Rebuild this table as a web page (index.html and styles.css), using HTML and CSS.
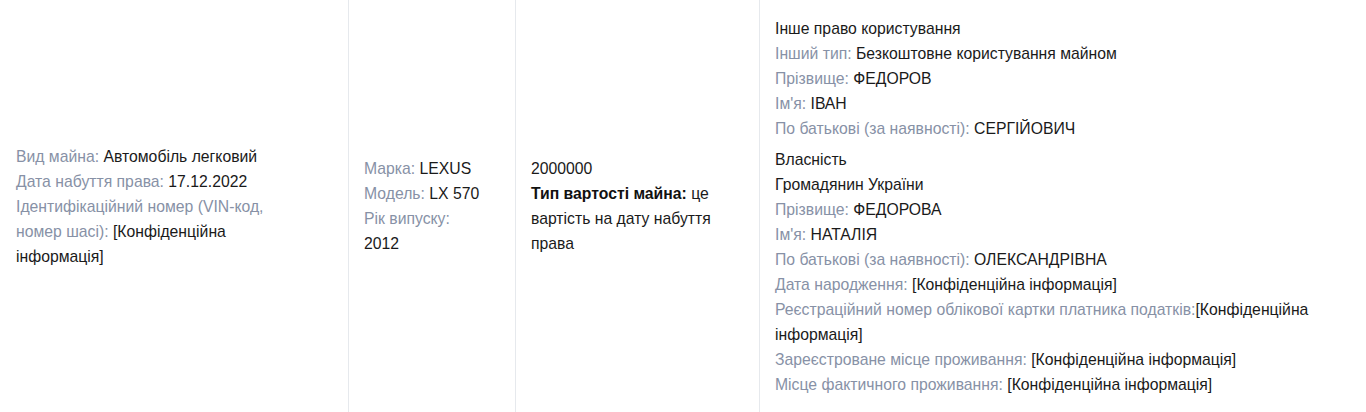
FILE: index.html
```html
<!DOCTYPE html>
<html lang="uk">
<head>
<meta charset="utf-8">
<title>Транспортний засіб</title>
<link rel="stylesheet" href="styles.css">
</head>
<body>
<div class="row">
  <div class="cell c1">
    <div class="inner w1">
      <span class="lbl">Вид майна:</span> Автомобіль легковий<br>
      <span class="lbl">Дата набуття права:</span> 17.12.2022<br>
      <span class="lbl">Ідентифікаційний номер (VIN-код, номер шасі):</span> [Конфіденційна інформація]
    </div>
  </div>
  <div class="cell c2">
    <div class="inner w2">
      <span class="lbl">Марка:</span> LEXUS<br>
      <span class="lbl">Модель:</span> LX 570<br>
      <span class="lbl">Рік випуску:</span> 2012
    </div>
  </div>
  <div class="cell c3">
    <div class="inner w3">
      2000000<br>
      <b>Тип вартості майна:</b> це вартість на дату набуття права
    </div>
  </div>
  <div class="cell c4">
    <div class="inner w4">
      <div class="block">
        Інше право користування<br>
        <span class="lbl">Інший тип:</span> Безкоштовне користування майном<br>
        <span class="lbl">Прізвище:</span> ФЕДОРОВ<br>
        <span class="lbl">Ім'я:</span> ІВАН<br>
        <span class="lbl">По батькові (за наявності):</span> СЕРГІЙОВИЧ
      </div>
      <div class="block">
        Власність<br>
        Громадянин України<br>
        <span class="lbl">Прізвище:</span> ФЕДОРОВА<br>
        <span class="lbl">Ім'я:</span> НАТАЛІЯ<br>
        <span class="lbl">По батькові (за наявності):</span> ОЛЕКСАНДРІВНА<br>
        <span class="lbl">Дата народження:</span> [Конфіденційна інформація]<br>
        <span class="lbl">Реєстраційний номер облікової картки платника податків:</span>[Конфіденційна інформація]<br>
        <span class="lbl">Зареєстроване місце проживання:</span> [Конфіденційна інформація]<br>
        <span class="lbl">Місце фактичного проживання:</span> [Конфіденційна інформація]
      </div>
    </div>
  </div>
</div>
</body>
</html>
```

FILE: styles.css
```css
html, body {
  margin: 0;
  padding: 0;
  background: #ffffff;
}
body {
  font-family: "Liberation Sans", Arial, sans-serif;
  font-size: 15.75px;
  line-height: 25px;
  color: #1a1a1a;
}
.row {
  display: grid;
  grid-template-columns: 349px 167px 244px 1fr;
  height: 412px;
}
.cell {
  display: flex;
  align-items: center;
  padding: 0 15px;
  border-right: 1px solid #e6e9ed;
}
.c1 { padding-left: 16px; }
.c4 { border-right: none; }
.w1 { width: 262px; }
.w2 { width: 118px; }
.w3 { width: 200px; }
.w4 { width: 570px; }
.block + .block { margin-top: 6px; }
.lbl { color: #8791a6; }
b { font-weight: bold; color: #111111; }
```
